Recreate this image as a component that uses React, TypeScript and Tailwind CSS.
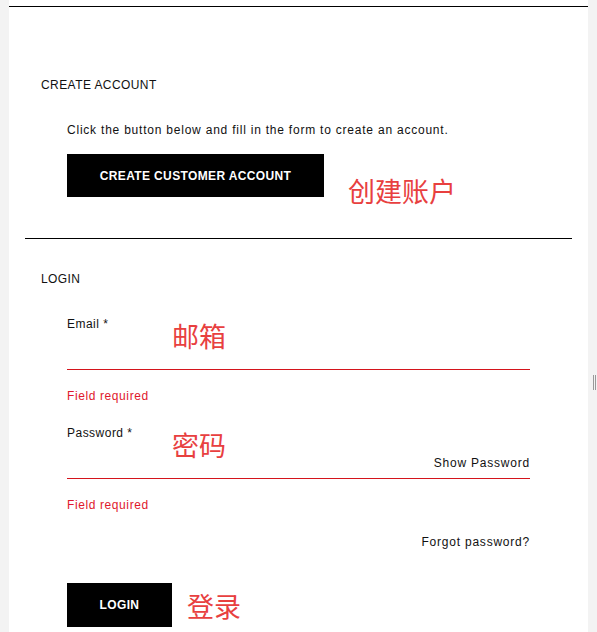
import React from "react";

const sans = { fontFamily: '"Liberation Sans", Arial, sans-serif' };

function Note({ text, className }: { text: string; className: string }) {
  return (
    <span
      className={`absolute whitespace-nowrap text-[27px] leading-none text-[#e8403f] ${className}`}
      style={{ fontFamily: '"Noto Sans CJK SC", sans-serif' }}
    >
      {text}
    </span>
  );
}

function Field({
  label,
  note,
  extra,
}: {
  label: string;
  note: string;
  extra?: React.ReactNode;
}) {
  return (
    <div className="relative flex flex-col">
      <label className="h-4 text-[12px] leading-4 tracking-[0.04em] text-[#111]">
        {label} *
      </label>
      <div className="flex h-[38px] items-end justify-end border-b border-[#d4141c] pb-[7px]">
        {extra}
      </div>
      <Note text={note} className="left-[105px] top-[6px]" />
      <small className="mt-[18px] h-4 text-[12px] leading-4 tracking-[0.05em] text-[#e0182d]">
        Field required
      </small>
    </div>
  );
}

export default function App() {
  return (
    <div className="flex h-[632px] w-full overflow-hidden bg-[#f3f3f3] px-[9px]" style={sans}>
      <main className="relative flex-1 bg-white pt-[6px]">
        <div className="border-t border-black" />

        <section className="px-8 pt-[70px]">
          <h2 className="h-4 text-[12px] leading-4 tracking-[0.035em] text-[#111]">CREATE ACCOUNT</h2>
          <div className="px-[26px] pt-[29px]">
            <p className="h-4 text-[12px] leading-4 tracking-[0.065em] text-[#111]">
              Click the button below and fill in the form to create an account.
            </p>
            <div className="relative mt-4">
              <button className="h-[43px] w-[257px] bg-black text-[12px] font-bold tracking-[0.03em] text-white">
                CREATE CUSTOMER ACCOUNT
              </button>
              <Note text="创建账户" className="left-[281px] top-[23px]" />
            </div>
          </div>
        </section>

        <div className="mx-4 mt-[41px] border-t border-black" />

        <section className="px-8 pt-8">
          <h2 className="h-4 text-[12px] leading-4 tracking-[0.035em] text-[#111]">LOGIN</h2>
          <form className="flex flex-col px-[26px] pt-[29px]">
            <Field label="Email" note="邮箱" />
            <div className="mt-[21px]">
              <Field
                label="Password"
                note="密码"
                extra={
                  <span className="text-[12px] leading-4 tracking-[0.065em] text-[#111]">
                    Show Password
                  </span>
                }
              />
            </div>
            <a className="mt-[21px] h-4 self-end text-[12px] leading-4 tracking-[0.065em] text-[#111]">
              Forgot password?
            </a>
            <div className="relative mt-[33px]">
              <button className="h-[44px] w-[105px] bg-black text-[12px] font-bold tracking-[0.03em] text-white">
                LOGIN
              </button>
              <Note text="登录" className="left-[120px] top-[9px]" />
            </div>
          </form>
        </section>
      </main>
      <div className="absolute right-[1px] top-[375px] flex h-[15px] gap-[1px]">
        <span className="w-[1px] bg-[#999]" />
        <span className="w-[1px] bg-[#999]" />
      </div>
    </div>
  );
}
